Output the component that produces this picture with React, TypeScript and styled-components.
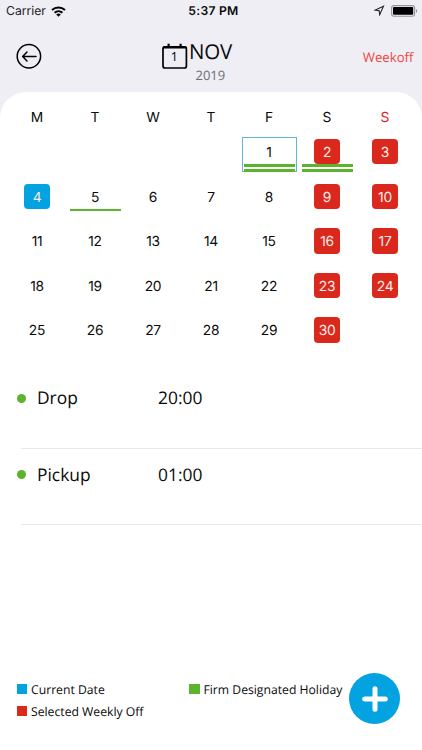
import React from "react";
import styled, { createGlobalStyle } from "styled-components";

const BLUE = "#03a2e0";
const RED = "#da291c";
const GREEN = "#5cb32e";

const GlobalStyle = createGlobalStyle`
  *, *::before, *::after { box-sizing: border-box; }
  body { margin: 0; background: #efeef5; }
`;

const Screen = styled.div`
  width: 422px;
  height: 750px;
  display: flex;
  flex-direction: column;
  overflow: hidden;
  background: #efeef5;
  color: #0a0a0a;
  font-family: "Open Sans", "Noto Sans", sans-serif;
  text-rendering: geometricPrecision;
`;

const StatusBar = styled.div`
  height: 22px;
  flex: none;
  display: grid;
  grid-template-columns: 1fr auto 1fr;
  align-items: center;
  padding: 0 4px 0 6px;
  font-family: Inter, sans-serif;
  font-size: 12.2px;
  line-height: 22px;
`;

const Carrier = styled.div`
  display: flex;
  align-items: center;
  gap: 5px;
  color: #222;
`;

const Clock = styled.div`
  font-weight: 600;
  letter-spacing: 0.25px;
  padding-left: 3px;
`;

const StatusIcons = styled.div`
  display: flex;
  justify-content: flex-end;
  align-items: center;
  gap: 6px;
  padding-bottom: 1px;
`;

const Header = styled.header`
  height: 70px;
  flex: none;
  display: grid;
  grid-template-columns: 146px 1fr 146px;
  padding: 0 8.5px 0 16px;
`;

const BackButton = styled.button`
  width: 26px;
  height: 26px;
  margin-top: 21px;
  padding: 0;
  border: 0;
  background: none;
  display: flex;
`;

const MonthPicker = styled.div`
  display: flex;
  align-items: flex-start;
`;

const CalendarIcon = styled.svg`
  flex: none;
  margin-top: 21px;
`;

const MonthText = styled.div`
  display: flex;
  flex-direction: column;
  padding: 16px 0 0 1px;
`;

const Month = styled.div`
  font-size: 20.5px;
  line-height: 28px;
  letter-spacing: -0.2px;
`;

const Year = styled.div`
  font-size: 13px;
  line-height: 18px;
  padding-left: 6.5px;
  color: #6f6e73;
`;

const WeekoffLink = styled.div`
  justify-self: end;
  margin-top: 25px;
  font-size: 13.2px;
  line-height: 20px;
  color: #f0483f;
`;

const Sheet = styled.main`
  flex: 1;
  display: flex;
  flex-direction: column;
  border-radius: 26px 26px 0 0;
  background: #fff;
`;

const Calendar = styled.section`
  padding: 13.4px 8px 0;
  font-family: Inter, sans-serif;
  font-size: 13.8px;
`;

const WeekHeader = styled.div`
  display: grid;
  grid-template-columns: repeat(7, 58px);
  height: 24px;
  line-height: 27px;
  text-align: center;
`;

const DayName = styled.div<{ $sunday: boolean }>`
  color: ${(p) => (p.$sunday ? "#e0201c" : "inherit")};
`;

const Days = styled.div`
  display: grid;
  grid-template-columns: repeat(7, 58px);
  grid-auto-rows: 44.6px;
`;

const DayCell = styled.div<{ $selected?: boolean }>`
  position: relative;
  display: flex;
  align-items: center;
  justify-content: center;
  &::before {
    content: ${(p) => (p.$selected ? '""' : "none")};
    position: absolute;
    left: 1.5px;
    right: 1px;
    top: 8px;
    height: 35px;
    border: 1px solid #64b3da;
  }
`;

const DayTile = styled.div<{ $fill: string }>`
  width: 25.5px;
  height: 25.5px;
  border-radius: 4px;
  line-height: 28.7px;
  letter-spacing: -0.25px;
  text-align: center;
  background: ${(p) => p.$fill};
  color: ${(p) => (p.$fill === "transparent" ? "inherit" : "#fbecea")};
`;

const Markers = styled.div`
  position: absolute;
  left: 3.5px;
  top: 34.8px;
  width: 51px;
  display: flex;
  flex-direction: column;
  gap: 2.6px;
`;

const Marker = styled.div`
  height: 2.6px;
  background: ${GREEN};
`;

const Trips = styled.section`
  padding-top: 19.9px;
`;

const Trip = styled.div`
  display: grid;
  grid-template-columns: 20px 121px 1fr;
  height: 76.3px;
  margin-left: 17px;
  padding-top: 13px;
  font-size: 17.4px;
  line-height: 26px;
  background: linear-gradient(#e8e8e8, #e8e8e8) 4px 100% / 100% 1px no-repeat;
`;

const Dot = styled.div`
  width: 9px;
  height: 9px;
  margin-top: 8.8px;
  border-radius: 50%;
  background: ${GREEN};
`;

const Footer = styled.footer`
  display: flex;
  justify-content: space-between;
  margin-top: auto;
  padding: 0 22px 26px 16.5px;
`;

const Legend = styled.div`
  display: grid;
  grid-template-columns: 172.5px auto;
  grid-auto-rows: 22px;
  padding-top: 5px;
  font-size: 12.2px;
`;

const LegendItem = styled.div`
  display: flex;
  align-items: center;
  gap: 4px;
  white-space: nowrap;
`;

const Swatch = styled.span<{ $fill: string }>`
  width: 10.5px;
  height: 10.5px;
  background: ${(p) => p.$fill};
`;

const AddButton = styled.button`
  width: 51px;
  height: 51px;
  flex: none;
  padding: 0;
  border: 0;
  border-radius: 50%;
  background: ${BLUE};
  display: grid;
  place-items: center;
`;

const dayNames = ["M", "T", "W", "T", "F", "S", "S"];
const today = 4;
const selected = 1;
const weeklyOff = [2, 3, 9, 10, 16, 17, 23, 24, 30];
const events: Record<number, number> = { 1: 2, 2: 2, 5: 1 };
const days = Array.from({ length: 30 }, (_, i) => i + 1);
const trips = [
  { label: "Drop", time: "20:00" },
  { label: "Pickup", time: "01:00" },
];
const legend = [
  { label: "Current Date", fill: BLUE },
  { label: "Firm Designated Holiday", fill: GREEN },
  { label: "Selected Weekly Off", fill: RED },
];

const fillFor = (day: number) =>
  day === today ? BLUE : weeklyOff.includes(day) ? RED : "transparent";

const FirstDay = styled(DayCell)`
  grid-column-start: 5;
`;

export default function App() {
  return (
    <Screen>
      <GlobalStyle />
      <StatusBar>
        <Carrier>
          Carrier
          <svg width="15" height="11" viewBox="0 0 15 11" fill="none" stroke="#000" strokeWidth="2">
            <path d="M1 4.1C4.7.6 10.3.6 14 4.1" />
            <path d="M3.6 6.8c2.2-2.1 5.6-2.1 7.8 0" />
            <path d="M5.2 8.4c1.3-1.2 3.3-1.2 4.6 0L7.5 10.8z" fill="#000" stroke="none" />
          </svg>
        </Carrier>
        <Clock>5:37 PM</Clock>
        <StatusIcons>
          <svg width="11" height="11" viewBox="0 0 11 11" fill="none" stroke="#222" strokeWidth="1.1">
            <path d="M9.5 1.2L1.2 5.1l4 .6.5 4z" strokeLinejoin="miter" />
          </svg>
          <svg width="27" height="12" viewBox="0 0 27 12">
            <rect x=".6" y=".6" width="23" height="10.6" rx="2.4" fill="none" stroke="#96959b" strokeWidth="1.1" />
            <rect x="2" y="2" width="20.2" height="7.8" rx="1" />
            <path d="M25 4v4c1.6-.6 1.6-3.4 0-4z" fill="#96959b" />
          </svg>
        </StatusIcons>
      </StatusBar>
      <Header>
        <BackButton aria-label="Back">
          <svg width="26" height="26" viewBox="0 0 26 26" fill="none" stroke="#000" strokeWidth="1.5">
            <circle cx="12.9" cy="13.3" r="11.7" />
            <path d="M20 13.5H6.8M11 9l-4.4 4.5L11 18" strokeLinecap="round" strokeLinejoin="round" />
          </svg>
        </BackButton>
        <MonthPicker>
          <CalendarIcon width="26" height="27" viewBox="0 0 26 27">
            <rect x="1" y="3.8" width="23.4" height="21.2" rx="2" fill="none" stroke="#000" strokeWidth="1.7" />
            <path d="M.7 5.6V4.7Q.7 3 2.4 3H23q1.7 0 1.7 1.7v.9zM5.5.8h2.2V3H5.5zM17.5.8h2.2V3h-2.2z" />
            <text x="12.4" y="18.2" textAnchor="middle" fontFamily="Open Sans" fontSize="12.5">1</text>
          </CalendarIcon>
          <MonthText>
            <Month>NOV</Month>
            <Year>2019</Year>
          </MonthText>
        </MonthPicker>
        <WeekoffLink>Weekoff</WeekoffLink>
      </Header>
      <Sheet>
        <Calendar>
          <WeekHeader>
            {dayNames.map((name, i) => (
              <DayName key={i} $sunday={i === 6}>{name}</DayName>
            ))}
          </WeekHeader>
          <Days>
            {days.map((day) => {
              const Cell = day === 1 ? FirstDay : DayCell;
              return (
                <Cell key={day} $selected={day === selected}>
                  <DayTile $fill={fillFor(day)}>{day}</DayTile>
                  {events[day] && (
                    <Markers>
                      {Array.from({ length: events[day] }, (_, i) => (
                        <Marker key={i} />
                      ))}
                    </Markers>
                  )}
                </Cell>
              );
            })}
          </Days>
        </Calendar>
        <Trips>
          {trips.map((trip) => (
            <Trip key={trip.label}>
              <Dot />
              <span>{trip.label}</span>
              <span>{trip.time}</span>
            </Trip>
          ))}
        </Trips>
        <Footer>
          <Legend>
            {legend.map((item) => (
              <LegendItem key={item.label}>
                <Swatch $fill={item.fill} />
                {item.label}
              </LegendItem>
            ))}
          </Legend>
          <AddButton aria-label="Add">
            <svg width="28" height="28" viewBox="0 0 28 28" stroke="#fff" strokeWidth="5" strokeLinecap="round">
              <path d="M14 3.7v20.6M3.7 14h20.6" />
            </svg>
          </AddButton>
        </Footer>
      </Sheet>
    </Screen>
  );
}
